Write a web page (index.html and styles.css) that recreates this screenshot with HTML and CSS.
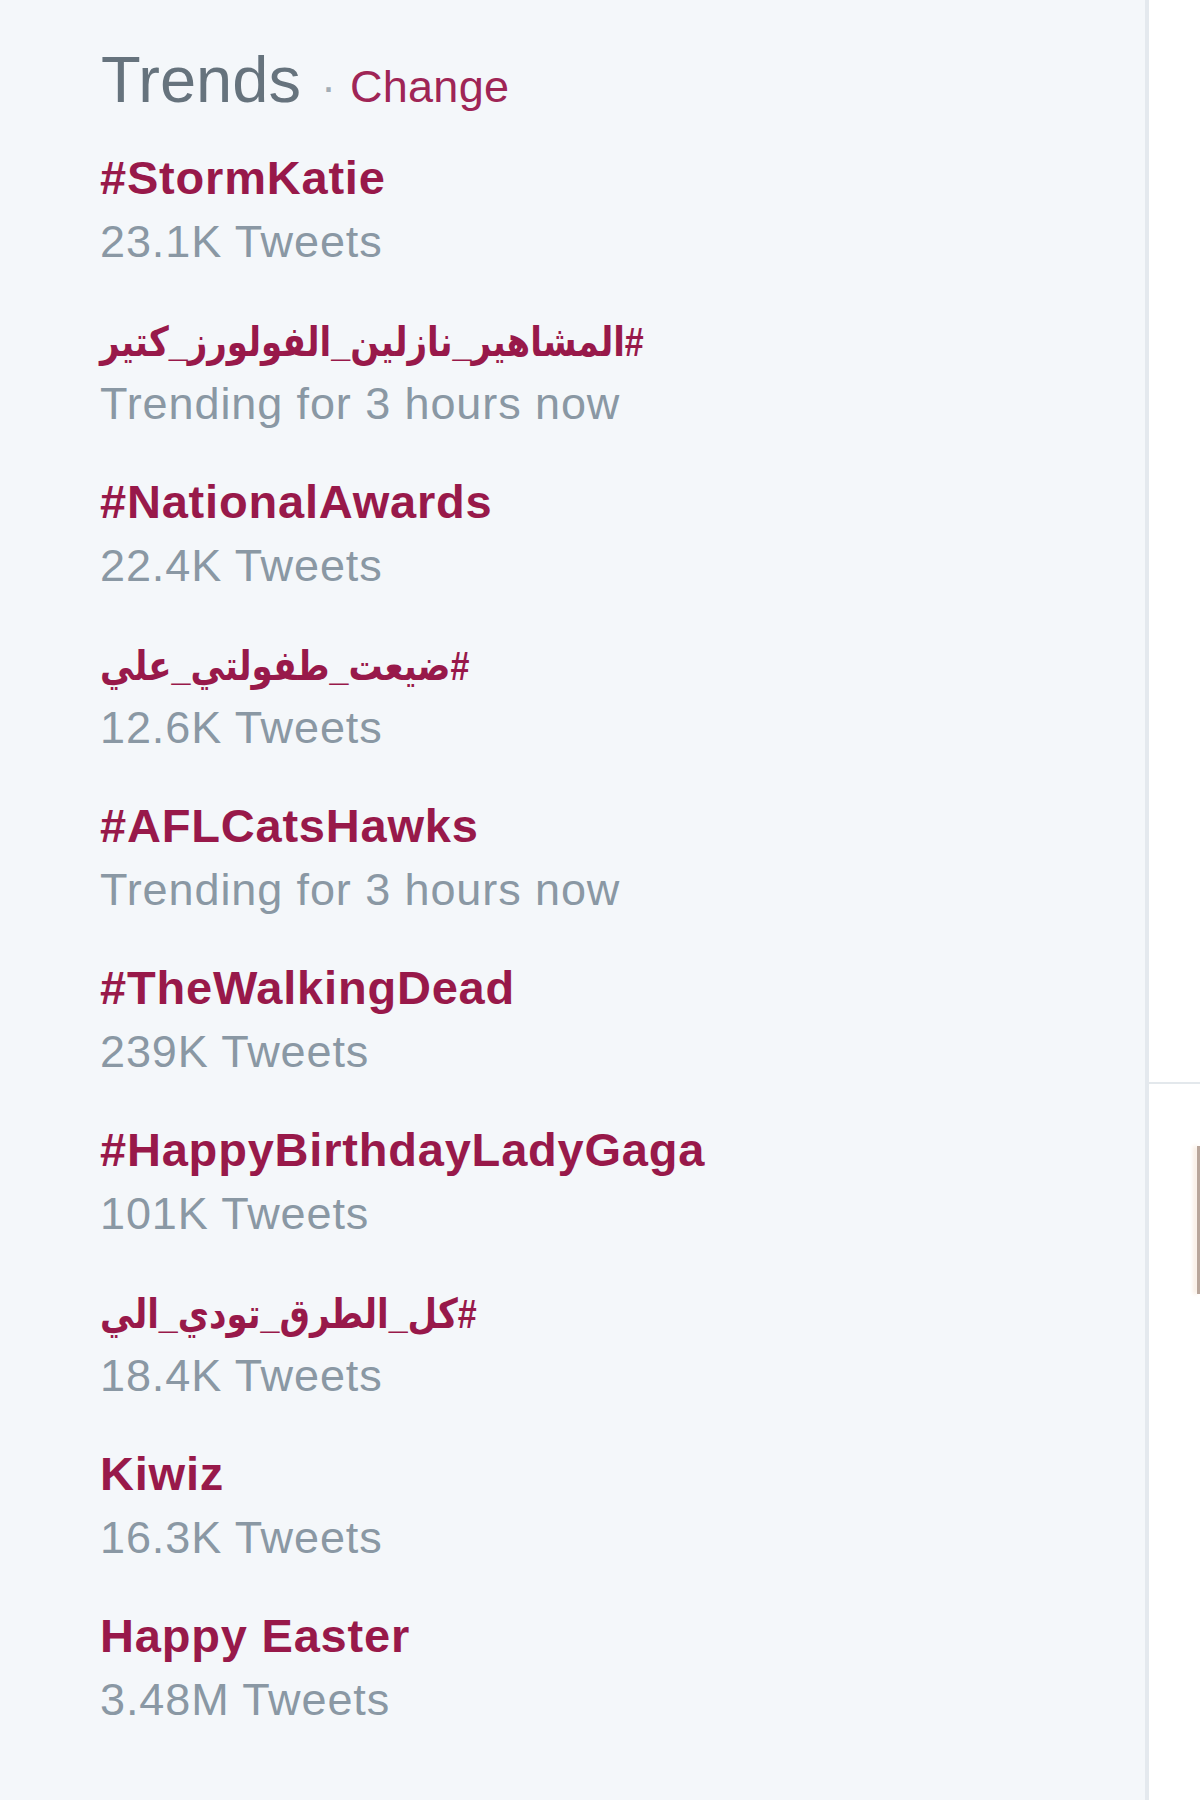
FILE: index.html
```html
<!DOCTYPE html>
<html lang="en">
<head>
<meta charset="utf-8">
<title>Trends</title>
<link rel="stylesheet" href="styles.css">
</head>
<body>
<div class="page">
  <section class="trends">
    <header class="trends-head">
      <h3 class="trends-title">Trends</h3><span class="middot">·</span><a class="change" href="#">Change</a>
    </header>
    <ul class="trend-list">
      <li class="trend">
        <a class="trend-name" href="#">#StormKatie</a>
        <div class="trend-meta">23.1K Tweets</div>
      </li>
      <li class="trend">
        <a class="trend-name" href="#"><span class="rtl" dir="rtl">#المشاهير_نازلين_الفولورز_كتير</span></a>
        <div class="trend-meta">Trending for 3 hours now</div>
      </li>
      <li class="trend">
        <a class="trend-name" href="#">#NationalAwards</a>
        <div class="trend-meta">22.4K Tweets</div>
      </li>
      <li class="trend">
        <a class="trend-name" href="#"><span class="rtl" dir="rtl">#ضيعت_طفولتي_علي</span></a>
        <div class="trend-meta">12.6K Tweets</div>
      </li>
      <li class="trend">
        <a class="trend-name" href="#">#AFLCatsHawks</a>
        <div class="trend-meta">Trending for 3 hours now</div>
      </li>
      <li class="trend">
        <a class="trend-name" href="#">#TheWalkingDead</a>
        <div class="trend-meta">239K Tweets</div>
      </li>
      <li class="trend">
        <a class="trend-name" href="#">#HappyBirthdayLadyGaga</a>
        <div class="trend-meta">101K Tweets</div>
      </li>
      <li class="trend">
        <a class="trend-name" href="#"><span class="rtl" dir="rtl">#كل_الطرق_تودي_الي</span></a>
        <div class="trend-meta">18.4K Tweets</div>
      </li>
      <li class="trend">
        <a class="trend-name" href="#">Kiwiz</a>
        <div class="trend-meta">16.3K Tweets</div>
      </li>
      <li class="trend">
        <a class="trend-name" href="#">Happy Easter</a>
        <div class="trend-meta">3.48M Tweets</div>
      </li>
    </ul>
  </section>
  <aside class="side">
    <div class="side-rule"></div>
    <div class="side-thumb"></div>
  </aside>
</div>
</body>
</html>
```
FILE: styles.css
```css
html, body {
  margin: 0;
  padding: 0;
  background: #ffffff;
}

body {
  font-family: "Liberation Sans", Arial, "DejaVu Sans", sans-serif;
}

.page {
  display: flex;
  min-height: 1800px;
}

.trends {
  width: 1149px;
  flex: none;
  box-sizing: border-box;
  background: #f4f7fa;
  border-right: 4px solid #e4e9ee;
  padding: 40px 0 0 100px;
}

.trends-head {
  display: flex;
  align-items: baseline;
  height: 80px;
  line-height: 80px;
  margin-bottom: 26px;
}

.trends-title {
  margin: 0 0 0 1px;
  font-size: 65px;
  font-weight: normal;
  color: #66737d;
}

.middot {
  font-size: 45px;
  color: #a3adb5;
  margin-left: 20px;
}

.change {
  font-size: 45px;
  color: #9f2556;
  text-decoration: none;
  margin-left: 14px;
  letter-spacing: 0.3px;
}

.trend-list {
  list-style: none;
  margin: 0;
  padding: 0;
  display: flex;
  flex-direction: column;
  gap: 34px;
}

.trend {
  display: flex;
  flex-direction: column;
  align-items: flex-start;
}

.trend-name {
  font-size: 47px;
  font-weight: bold;
  line-height: 64px;
  letter-spacing: 0.8px;
  color: #98194a;
  text-decoration: none;
}

.rtl {
  display: inline-block;
  font-size: 41px;
  line-height: 1;
  letter-spacing: 0;
  transform: scaleX(0.83);
  transform-origin: left center;
}

.trend-meta {
  font-size: 45px;
  line-height: 64px;
  letter-spacing: 0.9px;
  color: #8a98a4;
}

.side {
  flex: 1;
  display: flex;
  flex-direction: column;
  align-items: flex-end;
  padding-top: 1082px;
}

.side-rule {
  align-self: stretch;
  height: 2px;
  background: #e3e8ec;
}

.side-thumb {
  margin-top: 62px;
  width: 3px;
  height: 148px;
  background: #b9a69b;
  box-shadow: -3px 0 4px #f6e3d3;
}
```
